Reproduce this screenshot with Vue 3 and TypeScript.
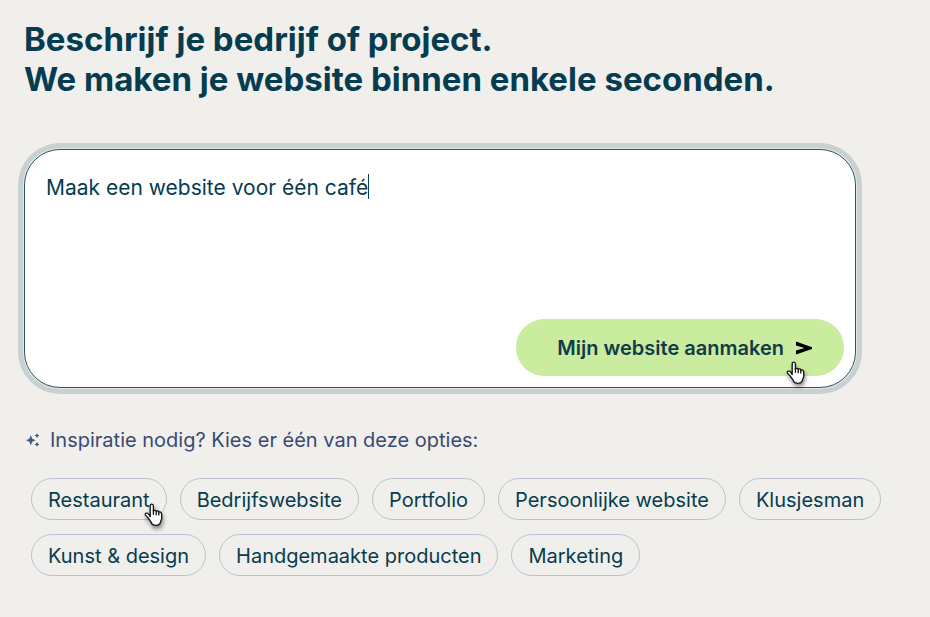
<script setup lang="ts">
import { nextTick, onMounted, ref, watch } from 'vue'

const prompt = ref('Maak een website voor één café')
const options: string[] = [
  'Restaurant',
  'Bedrijfswebsite',
  'Portfolio',
  'Persoonlijke website',
  'Klusjesman',
  'Kunst & design',
  'Handgemaakte producten',
  'Marketing',
]
const hovered = 'Restaurant'

const field = ref<HTMLTextAreaElement | null>(null)
const caretLeft = ref(0)

// Keeps the drawn caret behind the last character of the text.
function placeCaret(): void {
  const context = document.createElement('canvas').getContext('2d')
  if (!field.value || !context) return
  const style = getComputedStyle(field.value)
  context.font = `${style.fontWeight} ${style.fontSize} ${style.fontFamily}`
  caretLeft.value = Math.round(context.measureText(prompt.value).width)
}

function choose(option: string): void {
  prompt.value = `Maak een website voor ${option}`
}

onMounted(placeCaret)
watch(prompt, () => nextTick(placeCaret))
</script>

<template>
  <main class="page">
    <h1 class="title">
      Beschrijf je bedrijf of project.<br />
      We maken je website binnen enkele seconden.
    </h1>

    <form class="composer" @submit.prevent>
      <div class="entry">
        <textarea
          ref="field"
          v-model="prompt"
          class="field"
          aria-label="Beschrijf je bedrijf of project."
          spellcheck="false"
        ></textarea>
        <span class="caret" :style="{ left: caretLeft + 'px' }"></span>
      </div>
      <button class="submit" type="submit">
        <span>Mijn website aanmaken</span>
        <svg class="arrow" viewBox="0 0 18 14" aria-hidden="true">
          <path d="M1 0.500 17 6.200v1.700L1 13.500V9.600L9.500 7 1 4.400Z" />
        </svg>
        <svg class="hand hand-submit" viewBox="0 0 20 24" aria-hidden="true">
          <path d="M6.2 13.6V2.9c0-2.5 3.2-2.5 3.2 0v5c.5-.9 2.4-.8 2.8.4.7-.7 2.3-.4 2.6.8.8-.6 2.9-.1 2.9 1.8v4.4c0 1.7-1.4 3.1-1.6 5.1-.8 1.6-2.2 2-4.2 2s-3.4-.4-4.2-1.8c-.4-1.8-2-3.4-3.2-5.2-.9-1.4-2.6-2.4-3.2-3.7-.4-1.2.9-2 2.1-1.5 1.2.4 2 1.7 2.8 3.4Z" />
          <path class="knuckles" d="M9.4 7.5v4.3M12.2 8.3v3.9M14.8 9v3.6" />
        </svg>
      </button>
    </form>

    <section class="ideas">
      <h2 class="hint">
        <svg class="sparkles" viewBox="0 0 14 14" aria-hidden="true">
          <path d="M4.800 2.200 6.300 5.700 9.600 7.200 6.300 8.700 4.800 12.200 3.300 8.700 0 7.200 3.300 5.700Z" />
          <path d="M11 .2 11.900 1.700 13.400 2.600 11.900 3.500 11 5 10.100 3.500 8.600 2.600 10.100 1.700ZM11 9 11.900 10.500 13.400 11.400 11.900 12.300 11 13.800 10.100 12.300 8.600 11.400 10.100 10.500Z" />
        </svg>
        Inspiratie nodig? Kies er één van deze opties:
      </h2>
      <ul class="chips">
        <li v-for="option in options" :key="option">
          <button class="chip" type="button" @click="choose(option)">
            {{ option }}
            <svg v-if="option === hovered" class="hand hand-chip" viewBox="0 0 20 24" aria-hidden="true">
              <path d="M6.2 13.6V2.9c0-2.5 3.2-2.5 3.2 0v5c.5-.9 2.4-.8 2.8.4.7-.7 2.3-.4 2.6.8.8-.6 2.9-.1 2.9 1.8v4.4c0 1.7-1.4 3.1-1.6 5.1-.8 1.6-2.2 2-4.2 2s-3.4-.4-4.2-1.8c-.4-1.8-2-3.4-3.2-5.2-.9-1.4-2.6-2.4-3.2-3.7-.4-1.2.9-2 2.1-1.5 1.2.4 2 1.7 2.8 3.4Z" />
              <path class="knuckles" d="M9.4 7.5v4.3M12.2 8.3v3.9M14.8 9v3.6" />
            </svg>
          </button>
        </li>
      </ul>
    </section>
  </main>
</template>

<style>
body {
  margin: 0;
  background: #f0efeb;
}
</style>

<style scoped>
.page {
  padding: 19px 24px 40px;
  color: #063c50;
  font-family: Inter, "Liberation Sans", sans-serif;
}

.title {
  margin: 0 0 50px;
  font-size: 33px;
  font-weight: 700;
  line-height: 40px;
}

.composer {
  display: flex;
  flex-direction: column;
  margin-right: 50px;
  padding: 24px 11px 11px 21px;
  border: 1px solid #225662;
  border-radius: 36px;
  background: #fff;
  box-shadow: 0 0 0 1px #e6e8e5, 0 0 0 6px #c9d1d0;
}

.entry {
  position: relative;
  display: flex;
}

.field {
  flex: 1;
  height: 145px;
  box-sizing: border-box;
  padding: 0;
  border: 0;
  outline: 0;
  resize: none;
  background: transparent;
  color: inherit;
  caret-color: transparent;
  font: 400 21px/28px Inter, "Liberation Sans", sans-serif;
}

.caret {
  position: absolute;
  top: 0;
  width: 1px;
  height: 25px;
  background: #063c50;
}

.submit {
  position: relative;
  display: flex;
  align-items: center;
  align-self: flex-end;
  gap: 11px;
  padding: 15px 31px 14px 41px;
  border: 0;
  border-radius: 29px;
  background: #c9ec9f;
  color: #123a49;
  font: 600 20px/28px Inter, "Liberation Sans", sans-serif;
  cursor: pointer;
}

.arrow {
  width: 18px;
  height: 14px;
  fill: #000;
}

.hand {
  position: absolute;
  width: 20px;
  height: 24px;
  overflow: visible;
  fill: #fff;
  stroke: #111;
  stroke-width: 1.3;
  stroke-linejoin: round;
  filter: drop-shadow(1px 3px 2px rgba(0, 0, 0, 0.45));
}

.knuckles {
  fill: none;
}

.hand-submit {
  right: 38px;
  bottom: -9px;
}

.hand-chip {
  right: 2px;
  bottom: -8px;
}

.ideas {
  margin-top: 38px;
}

.hint {
  display: flex;
  align-items: center;
  gap: 10px;
  margin: 0 0 24px 2px;
  color: #3a4a72;
  font-size: 20px;
  font-weight: 400;
  line-height: 28px;
}

.sparkles {
  width: 14px;
  height: 14px;
  fill: #405a85;
}

.chips {
  display: flex;
  flex-wrap: wrap;
  gap: 14px 13px;
  margin: 0;
  padding: 0 0 0 7px;
  list-style: none;
}

.chip {
  position: relative;
  display: block;
  padding: 7px 16px 5px;
  border: 1px solid #bbc3d3;
  border-radius: 21px;
  background: transparent;
  color: #063c50;
  font: 400 20px/28px Inter, "Liberation Sans", sans-serif;
  cursor: pointer;
}
</style>
